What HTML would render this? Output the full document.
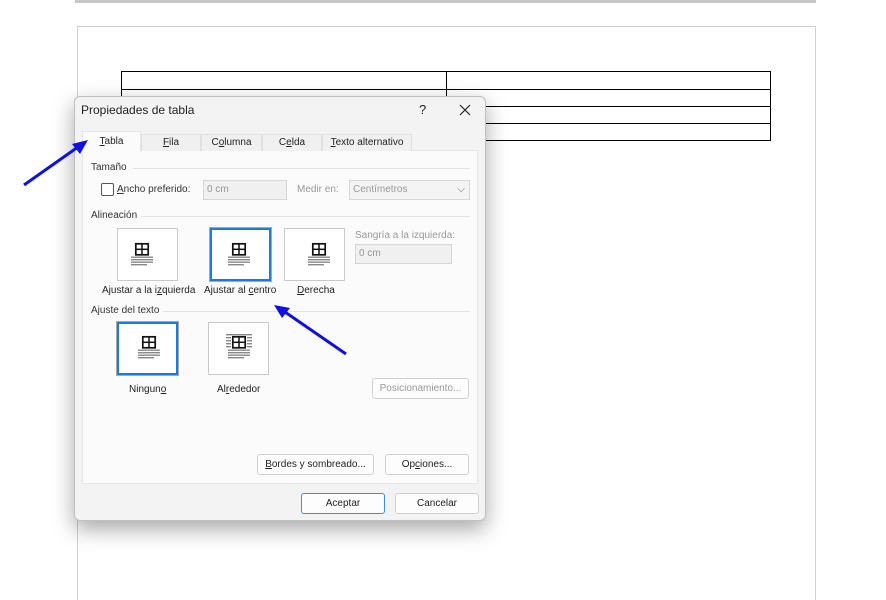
<!DOCTYPE html>
<html><head><meta charset="utf-8"><style>
*{margin:0;padding:0;box-sizing:border-box}
html,body{width:886px;height:600px;overflow:hidden}
body{background:#fff;position:relative;font-family:"Liberation Sans",sans-serif;font-size:10px;color:#222}
.a{position:absolute}
.ruler{left:75px;top:0;width:741px;height:3px;background:#c8c8c8}
.page{left:77px;top:26px;width:739px;height:580px;border:1px solid #d0d0d0}
.hl{position:absolute;height:1px;background:#000}
.vl{position:absolute;width:1px;background:#000}
.dlg{left:74px;top:96px;width:412px;height:425px;background:#f3f3f3;border:1px solid #c0c0c0;border-radius:6px;box-shadow:0 8px 22px rgba(0,0,0,.35)}
.panel{left:7px;top:53px;width:396px;height:334px;background:#fbfbfb;border:1px solid #e6e6e6}
.tab{position:absolute;top:37px;height:17px;background:#f0f0f0;border:1px solid #e0e0e0;border-bottom:none;text-align:center;line-height:16px}
.tab.act{top:34px;height:21px;background:#fbfbfb;border-color:#e6e6e6;line-height:20px}
u{text-decoration:underline}
.sec{position:absolute;color:#333}
.sep{position:absolute;height:1px;background:#e3e3e3}
.box{position:absolute;width:61px;height:53px;background:#fff;border:1px solid #c9c9c9}
.box.sel{border:2px solid #1a7ae0;box-shadow:0 0 0 1px #a8a8a8}
.lbl{position:absolute;text-align:center}
.inp{position:absolute;height:20px;background:#f0f0f0;border:1px solid #d6d6d6;color:#999;line-height:18px;padding-left:3px}
.btn{position:absolute;height:21px;background:#fdfdfd;border:1px solid #d0d0d0;border-radius:3px;text-align:center;line-height:19px}
</style></head><body>
<div class="a ruler"></div>
<div class="a page"></div>
<div class="hl" style="left:121px;top:71px;width:650px"></div>
<div class="hl" style="left:121px;top:89px;width:650px"></div>
<div class="hl" style="left:121px;top:106px;width:650px"></div>
<div class="hl" style="left:121px;top:123px;width:650px"></div>
<div class="hl" style="left:121px;top:140px;width:650px"></div>
<div class="vl" style="left:121px;top:71px;height:70px"></div>
<div class="vl" style="left:446px;top:71px;height:70px"></div>
<div class="vl" style="left:770px;top:71px;height:70px"></div>

<div class="a dlg">
 <div class="a" style="left:6px;top:6px;font-size:12px">Propiedades de tabla</div>
 <div class="a" style="left:344px;top:5px;font-size:13px">?</div>
 <svg class="a" style="left:384px;top:7px" width="12" height="12"><path d="M1 1L11 11M11 1L1 11" stroke="#222" stroke-width="1.2"/></svg>
 <div class="a panel"></div>
 <div class="tab act" style="left:7px;width:59px"><u>T</u>abla</div>
 <div class="tab" style="left:66px;width:60px"><u>F</u>ila</div>
 <div class="tab" style="left:126px;width:61px">C<u>o</u>lumna</div>
 <div class="tab" style="left:187px;width:60px">C<u>e</u>lda</div>
 <div class="tab" style="left:247px;width:90px"><u>T</u>exto alternativo</div>

 <div class="sec" style="left:16px;top:65px">Tamaño</div><div class="sep" style="left:58px;top:71px;width:337px"></div>
 <div class="a" style="left:26px;top:86px;width:13px;height:13px;border:1px solid #555;border-radius:2px;background:#fff"></div>
 <div class="sec" style="left:42px;top:87px"><u>A</u>ncho preferido:</div>
 <div class="inp" style="left:128px;top:83px;width:84px">0 cm</div>
 <div class="sec" style="left:222px;top:87px;color:#999">Medir en:</div>
 <div class="inp" style="left:274px;top:83px;width:121px;background:#f4f4f4">Centímetros<span style="position:absolute;right:4px;top:0;color:#666">⌵</span></div>

 <div class="sec" style="left:16px;top:113px">Alineación</div><div class="sep" style="left:66px;top:119px;width:329px"></div>
 <div class="box" style="left:42px;top:131px"></div>
 <div class="box sel" style="left:135px;top:131px"></div>
 <div class="box" style="left:209px;top:131px"></div>
 <div class="lbl" style="left:27px;top:188px">Ajustar a la i<u>z</u>quierda</div>
 <div class="lbl" style="left:129px;top:188px">Ajustar al <u>c</u>entro</div>
 <div class="lbl" style="left:222px;top:188px"><u>D</u>erecha</div>
 <div class="sec" style="left:280px;top:133px;color:#999">Sangría a la izquierda:</div>
 <div class="inp" style="left:280px;top:147px;width:97px">0 cm</div>

 <div class="sec" style="left:16px;top:208px">Ajuste del texto</div><div class="sep" style="left:88px;top:214px;width:307px"></div>
 <div class="box sel" style="left:42px;top:225px"></div>
 <div class="box" style="left:133px;top:225px"></div>
 <div class="lbl" style="left:54px;top:287px">Ningun<u>o</u></div>
 <div class="lbl" style="left:142px;top:287px">Al<u>r</u>ededor</div>
 <div class="btn" style="left:297px;top:281px;width:97px;color:#999">Posicionamiento...</div>
 <div class="btn" style="left:182px;top:357px;width:117px"><u>B</u>ordes y sombreado...</div>
 <div class="btn" style="left:310px;top:357px;width:84px">Op<u>c</u>iones...</div>
 <div class="btn" style="left:226px;top:396px;width:84px;border-color:#3b8ee0">Aceptar</div>
 <div class="btn" style="left:320px;top:396px;width:84px">Cancelar</div>
</div>

<svg class="a" style="left:0;top:0" width="886" height="600">
 <defs><g id="ic"><rect x="0.8" y="0.8" width="12.4" height="11" fill="#fff" stroke="#111" stroke-width="1.7"/><line x1="7" y1="0" x2="7" y2="12" stroke="#111" stroke-width="1.5"/><line x1="0" y1="6.3" x2="14" y2="6.3" stroke="#111" stroke-width="1.5"/></g>
 <g id="ln"><rect x="-4" y="13.5" width="22" height="1.4" fill="#888"/><rect x="-4" y="16" width="22" height="1.4" fill="#888"/><rect x="-4" y="18.5" width="22" height="1.4" fill="#888"/><rect x="-4" y="21" width="16" height="1.4" fill="#888"/></g></defs>
 <g transform="translate(135,243)"><use href="#ln"/><use href="#ic"/></g>
 <g transform="translate(232,243)"><use href="#ln"/><use href="#ic"/></g>
 <g transform="translate(312,243)"><use href="#ln"/><use href="#ic"/></g>
 <g transform="translate(142,336)"><use href="#ln"/><use href="#ic"/></g>
 <g transform="translate(232,336)">
  <g fill="#888"><rect x="-6" y="-2" width="26" height="1.4"/><rect x="-6" y="1" width="5" height="1.4"/><rect x="-6" y="4" width="5" height="1.4"/><rect x="-6" y="7" width="5" height="1.4"/><rect x="-6" y="10" width="5" height="1.4"/><rect x="15" y="1" width="5" height="1.4"/><rect x="15" y="4" width="5" height="1.4"/><rect x="15" y="7" width="5" height="1.4"/><rect x="15" y="10" width="5" height="1.4"/></g>
  <use href="#ln"/><use href="#ic"/></g>
 <g stroke="#1010e0" stroke-width="3" fill="#1010e0">
  <line x1="24" y1="185" x2="78" y2="147"/><polygon points="88,140 72,144 80,154" stroke="none"/>
  <line x1="346" y1="354" x2="285" y2="312"/><polygon points="274,305 290,308 282,318" stroke="none"/>
 </g>
</svg>
</body></html>
